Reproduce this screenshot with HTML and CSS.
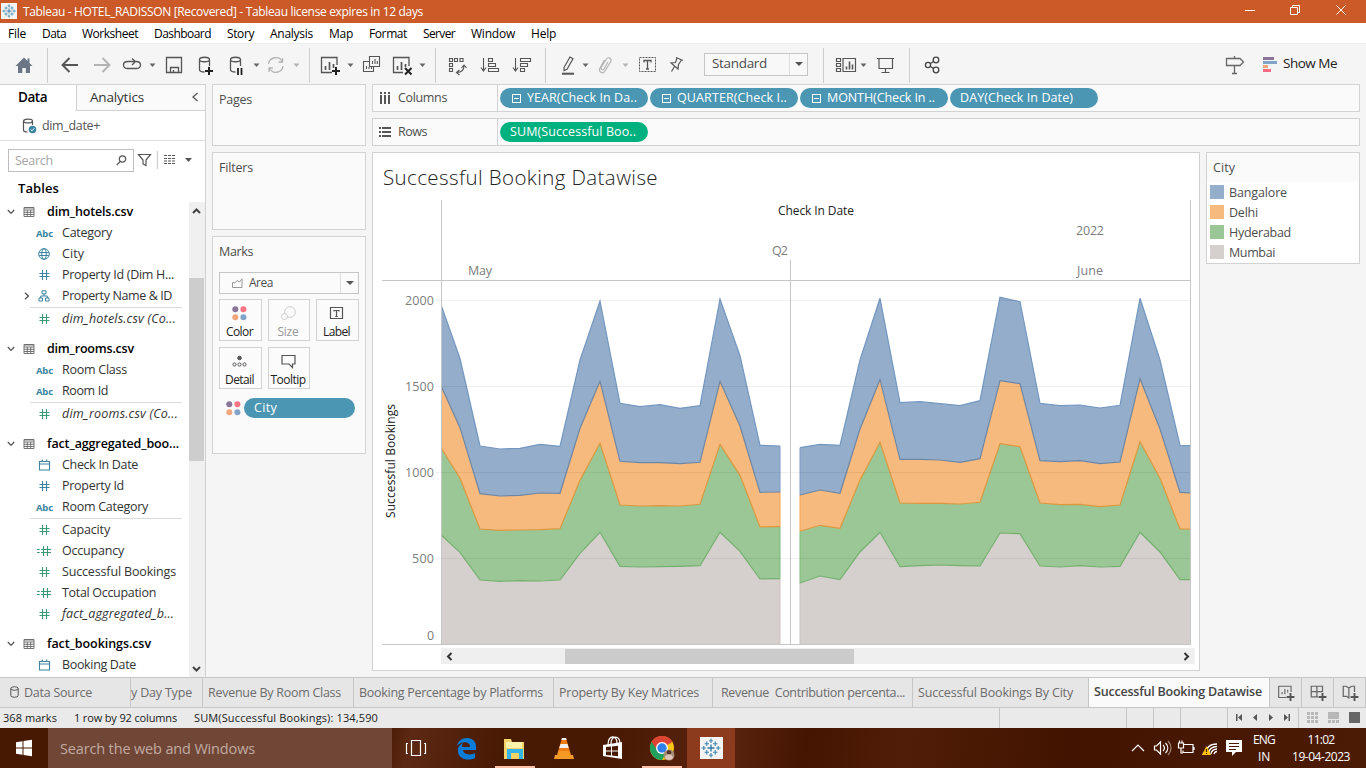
FILE: index.html
```html
<!DOCTYPE html>
<html lang="en">
<head>
<meta charset="utf-8">
<title>Tableau - HOTEL_RADISSON</title>
<link rel="stylesheet" href="styles.css">
</head>
<body>
<svg class="defs" width="0" height="0">
  <symbol id="tableau" viewBox="0 0 18 18"><path d="M9 5.8v6.4M5.8 9h6.4" stroke="#2d7aa8" stroke-width="1.2"/><path d="M9 .5v4M7.300 2.500h3.400M9 13.500v4M7.300 15.500h3.400M2.500 7.300v3.400M.5 9h4M15.500 7.300v3.400M13.500 9h4M5.200 3.200v4M3.200 5.200h4M12.800 3.200v4M10.800 5.200h4M5.200 10.800v4M3.200 12.800h4M12.800 10.800v4M10.800 12.800h4" stroke="#3d88b0" stroke-width="1"/></symbol>
  <symbol id="table" viewBox="0 0 12 12"><path d="M1 1.500h10v9H1zM1 4h10M1 6.300h10M1 8.500h10M4.300 4v6.500M7.700 4v6.500M1 2h10" fill="none" stroke="#666" stroke-width=".9"/></symbol>
  <symbol id="down" viewBox="0 0 8 6"><path d="M.8 1 4 4.400 7.200 1" fill="none" stroke="#555" stroke-width="1.300"/></symbol>
  <symbol id="hash" viewBox="0 0 14 12"><path d="M5.500 1v10M9.500 1v10M2.500 4.500h10M2.500 7.500h10" fill="none" stroke="currentColor" stroke-width="1.100"/></symbol>
  <symbol id="ehash" viewBox="0 0 14 12"><path d="M0 4.500h2.700M0 7.500h2.700M6.500 1v10M10.500 1v10M4 4.500h10M4 7.500h10" fill="none" stroke="currentColor" stroke-width="1.100"/></symbol>
  <symbol id="globe" viewBox="0 0 14 12"><g fill="none" stroke="currentColor"><circle cx="7" cy="6" r="5.300"/><ellipse cx="7" cy="6" rx="2.200" ry="5.300"/><path d="M2.200 4.500h9.600M2.200 7.500h9.600"/></g></symbol>
  <symbol id="tree" viewBox="0 0 14 12"><path d="M5 .8h4v3H5zM2 8h3.500v3H2zM8.500 8H12v3H8.500zM7 4v2M3.700 8V6h6.600v2" fill="none" stroke="currentColor"/></symbol>
  <symbol id="cal" viewBox="0 0 14 12"><path d="M2.500 2.500h10v8.500h-10zM2.500 5h10M5.300.5v2M9.700.5v2" fill="none" stroke="currentColor" stroke-width="1.100"/></symbol>
  <symbol id="dots" viewBox="0 0 15 15"><circle cx="3.300" cy="3.300" r="3" fill="#8b7399"/><circle cx="11.400" cy="3.300" r="3" fill="#fa7383"/><circle cx="3.300" cy="11.300" r="3" fill="#f3a57c"/><circle cx="11.400" cy="11.300" r="3" fill="#82a4cb"/></symbol>
</svg>

<header class="titlebar">
  <span class="app"><svg width="14" height="14"><use href="#tableau"/></svg></span>
  <span class="cap" data-w="400">Tableau - HOTEL_RADISSON [Recovered] - Tableau license expires in 12 days</span>
  <svg class="push" width="126" height="23" viewBox="1240 0 126 23" fill="none" stroke="#fff"><path d="M1245 10.5h10M1290.5 7.5h7v7h-7zM1292.5 7.5v-2h7v7h-2"/><path d="m1336.500 5.500 9 9m0-9-9 9"/></svg>
</header>

<nav class="menu">
  <span data-w="18">File</span><span data-w="24">Data</span><span data-w="56">Worksheet</span><span data-w="57">Dashboard</span><span data-w="27">Story</span><span data-w="43">Analysis</span><span data-w="24">Map</span><span data-w="38">Format</span><span data-w="32">Server</span><span data-w="44">Window</span><span data-w="25">Help</span>
</nav>

<div class="toolbar">
  <svg width="48" height="41" viewBox="0 43 48 41"><path d="M24 56.500 15.500 65h2.500v7h4.300v-5h3.500v5H30v-7h2.500l-3-3v-4.500h-2V60z" fill="#6a7685"/><path d="M47.500 47v35" stroke="#ccc"/></svg>
  <svg width="262" height="41" viewBox="48 43 262 41" fill="none" stroke="#555" stroke-width="1.3">
    <path d="M78 64H63m6.500-7-7 7 7 7" stroke-width="1.9"/>
    <path d="M94 64h15m-6.500-7 7 7-7 7" stroke="#b4b4b4" stroke-width="1.9"/>
    <path d="M128 67.500c-6 0-6-7 0-7h7m-3-3 3.500 3L132 64m4-3.500c6 0 6 7 0 7h-9"/>
    <path d="M149.500 62.500h6l-3 3.500z" fill="#666" stroke="none"/>
    <path d="M166.500 56.500h15v15h-15zM170.500 71v-4.500h8V71M173.500 71v-2"/>
    <path d="M199.500 58.500c0-3 10-3 10 0s-10 3-10 0v10c0 2 3 2.500 5 2.500M209.500 58.500V65"/><path d="M209 66v8M205 70h8" stroke="#222" stroke-width="2"/>
    <path d="M230.500 58.500c0-3 10-3 10 0s-10 3-10 0v10c0 2 3 2.500 5 2.500M240.500 58.500V65"/><path d="M238 67v7M241.500 67v7" stroke="#222" stroke-width="1.8"/>
    <path d="M253.500 62.500h6l-3 3.500z" fill="#666" stroke="none"/>
    <g stroke="#b4b4b4"><path d="M268.500 63c1-7 11-9 14-2m0-4v4h-4M283 65c-1 7-10 9-14 2m0 4v-4h4"/></g>
    <path d="M293.500 62.500h6l-3 3.500z" fill="#b4b4b4" stroke="none"/><path d="M309.500 47v35" stroke="#ccc" stroke-width="1"/>
  </svg>
  <svg width="126" height="41" viewBox="310 43 126 41" fill="none" stroke="#555" stroke-width="1.3">
    <path d="M337 64v-7.500h-15.500v15H332"/><path d="M325.500 69v-4M329.500 69v-8M333.500 67v-4" stroke-width="1.7"/><path d="M336 66v8M332 70h8" stroke="#222" stroke-width="2"/>
    <path d="M347.500 62.500h6l-3 3.500z" fill="#666" stroke="none"/>
    <path d="M369.500 55.500h10v10h-10zM369 60.500h-5.500v10h10V66M372.500 63v-3M375 63v-5M377.300 63v-3M366.500 68v-3M369 68v-2M371.500 68v-2" stroke-width="1.1"/>
    <path d="M409 65v-8.500h-15.500v15H403"/><path d="M397.500 69v-4M401.500 69v-8M405.500 66v-3" stroke-width="1.7"/><path d="m405 67 6.500 6.500m0-6.500-6.500 6.500" stroke="#222" stroke-width="2"/>
    <path d="M419.500 62.500h6l-3 3.500z" fill="#666" stroke="none"/><path d="M435.500 47v35" stroke="#ccc" stroke-width="1"/>
  </svg>
  <svg width="110" height="41" viewBox="436 43 110 41" fill="none" stroke="#555" stroke-width="1.1">
    <path d="M449.500 57.500h3v3h-3zM454.500 57.500h3v3h-3zM460 57.500h3v3h-3zM449.500 62.500h3v3h-3zM449.500 67.500h3v3h-3zM457 71.500c5 0 7-2 7-7m-2.500 2.500 2.500-3 2.500 3M459.500 69l-3 2.500 3 2.500"/>
    <path d="M483.500 57v12m-2.500-2.500 2.500 3.500 2.500-3.500M488.500 57.500h4v3h-4zM488.500 62.500h7v3h-7zM488.500 67.500h10v3h-10z"/>
    <path d="M515.500 57v12m-2.500-2.500 2.500 3.500 2.500-3.500M520.500 57.500h10v3h-10zM520.500 62.500h7v3h-7zM520.500 67.500h4v3h-4z"/><path d="M545.500 47v35" stroke="#ccc"/>
  </svg>
  <svg width="158" height="41" viewBox="546 43 158 41" fill="none" stroke="#555" stroke-width="1.2">
    <path d="m564 66.500 6-10.500 3 1.800-6 10.500-3 1.200z" /><path d="M562 72.700h12" stroke-width="2"/>
    <path d="M582.500 62.500h6l-3 3.500z" fill="#666" stroke="none"/><path d="M622.500 62.500h6l-3 3.500z" fill="#b4b4b4" stroke="none"/>
    <path d="m608 61-4 7c-1 2-4 0-2.500-2l5-8c2-3 6 0 4 3l-5.500 9c-2 3.500-7 1-5-3l4.500-8" stroke="#b4b4b4"/>
    <path d="M639.500 56.500h16v14h-16z" stroke-dasharray="2 1" stroke-width="1"/><path d="M644 61.500v-2h7v2M647.500 59.500v8.500M646 68h3" stroke-width="1.3"/>
    <path d="m676 56.500 7 3m-6-2.500-1.500 4.500-4.500.5 7 6 .5-4.500 3-4.500M674.500 65.500l-3 5"/>
  </svg>
  <div class="select"><span data-w="55">Standard</span><i></i></div>
  <svg width="102" height="41" viewBox="808 43 102 41" fill="none" stroke="#555" stroke-width="1.2">
    <path d="M823.500 47v35M909.500 47v35" stroke="#ccc" stroke-width="1"/>
    <path d="M836.500 57.500h4v3h-4zM836.500 62.500h4v3h-4zM836.500 67.500h4v3h-4zM843 57.500h12.500v13H843z"/><path d="M846.500 68.500v-3M849.500 68.500v-8M852.500 68.500v-5" stroke-width="1.6"/>
    <path d="M860.500 62.500h6l-3 3.500z" fill="#666" stroke="none"/><path d="M877 57.500h17M879 58v9.500h13.500V58M885.500 67.500v4M881.500 71.500h8"/>
  </svg>
  <svg width="373" height="41" viewBox="910 43 373 41" fill="none" stroke="#444" stroke-width="1.3">
    <circle cx="928" cy="64" r="2.600"/><circle cx="936" cy="59" r="2.800"/><circle cx="936" cy="69" r="2.800"/><path d="m930.500 62.500 3-2M930.500 65.500l3 2"/>
    <path d="M1234.500 55v2.500M1226.500 57.500h13.500l3.500 3.500-3.500 3.500h-13.500zM1234.500 64.500v8M1232 72.500h5" stroke="#666"/>
    <g stroke="none"><path d="M1263 56h11v3h-11z" fill="#8b7399"/><path d="M1263 60h14v3h-14z" fill="#82a4cb"/><path d="M1263 64h5v3h-5z" fill="#f3a57c"/><path d="M1263 68h8v3h-8z" fill="#fa6a80"/></g>
  </svg>
  <span class="showme" data-w="54">Show Me</span>
</div>

<main class="main">
  <aside class="datapane">
    <div class="ptabs"><b><span data-w="29">Data</span></b><div class="an"><span data-w="54">Analytics</span><svg width="8" height="10" viewBox="0 0 8 10"><path d="M6.500 1 2 5l4.500 4" fill="none" stroke="#555" stroke-width="1.3"/></svg></div></div>
    <div class="source"><svg width="15" height="16" viewBox="0 0 15 16"><path d="M1.500 3c0-2.500 9-2.500 9 0s-9 2.500-9 0v9c0 1.500 2.500 2 4 2M10.500 3v4" fill="none" stroke="#555" stroke-width="1.2"/><circle cx="10.500" cy="11.500" r="3.800" fill="#3a86a3"/><path d="m8.700 11.500 1.300 1.300 2.300-2.500" stroke="#fff" fill="none"/></svg><span data-w="58">dim_date+</span></div>
    <div class="finder"><div class="search"><span data-w="38">Search</span><svg width="11" height="11" viewBox="0 0 11 11" fill="none" stroke="#555" stroke-width="1.200"><circle cx="6.500" cy="4" r="3.200"/><path d="M4.200 6.500.8 10"/></svg></div>
      <svg width="62" height="24" viewBox="136 148 62 24" fill="none" stroke="#555" stroke-width="1.2"><path d="M138.500 154.500h12l-4.500 5.500v5.500l-3-1.500v-4z"/><path d="M157.500 151v18" stroke="#ccc"/><path d="M164 155.500h12M164 158.500h12M164 161h12M164 163.500h12" stroke-dasharray="3 1"/><path d="M185 158h7l-3.500 4z" fill="#555" stroke="none"/></svg></div>
    <h2><span data-w="41">Tables</span></h2>
    <div class="treewrap">
      <div class="tree">
        <section>
          <div class="hd"><svg width="8" height="6"><use href="#down"/></svg><svg width="12" height="12"><use href="#table"/></svg><span data-w="86">dim_hotels.csv</span></div>
          <div class="row"><em>Abc</em><span data-w="50">Category</span></div>
          <div class="row"><svg><use href="#globe"/></svg><span data-w="22">City</span></div>
          <div class="row"><svg><use href="#hash"/></svg><span data-w="112">Property Id (Dim H...</span></div>
          <div class="row"><svg class="exp" viewBox="0 0 6 8"><path d="m1 .8 3.400 3.200L1 7.200" fill="none" stroke="#555" stroke-width="1.300"/></svg><svg><use href="#tree"/></svg><span data-w="110">Property Name &amp; ID</span></div>
          <hr><div class="row g"><svg><use href="#hash"/></svg><i data-w="114">dim_hotels.csv (Co...</i></div>
        </section>
        <section>
          <div class="hd"><svg width="8" height="6"><use href="#down"/></svg><svg width="12" height="12"><use href="#table"/></svg><span data-w="87">dim_rooms.csv</span></div>
          <div class="row"><em>Abc</em><span data-w="65">Room Class</span></div>
          <div class="row"><em>Abc</em><span data-w="46">Room Id</span></div>
          <hr><div class="row g"><svg><use href="#hash"/></svg><i data-w="116">dim_rooms.csv (Co...</i></div>
        </section>
        <section>
          <div class="hd"><svg width="8" height="6"><use href="#down"/></svg><svg width="12" height="12"><use href="#table"/></svg><span data-w="132">fact_aggregated_boo...</span></div>
          <div class="row"><svg><use href="#cal"/></svg><span data-w="76">Check In Date</span></div>
          <div class="row"><svg><use href="#hash"/></svg><span data-w="62">Property Id</span></div>
          <div class="row"><em>Abc</em><span data-w="86">Room Category</span></div>
          <hr><div class="row g"><svg><use href="#hash"/></svg><span data-w="48">Capacity</span></div>
          <div class="row g"><svg><use href="#ehash"/></svg><span data-w="62">Occupancy</span></div>
          <div class="row g"><svg><use href="#hash"/></svg><span data-w="114">Successful Bookings</span></div>
          <div class="row g"><svg><use href="#ehash"/></svg><span data-w="94">Total Occupation</span></div>
          <div class="row g"><svg><use href="#hash"/></svg><i data-w="112">fact_aggregated_b...</i></div>
        </section>
        <section>
          <div class="hd"><svg width="8" height="6"><use href="#down"/></svg><svg width="12" height="12"><use href="#table"/></svg><span data-w="104">fact_bookings.csv</span></div>
          <div class="row"><svg><use href="#cal"/></svg><span data-w="74">Booking Date</span></div>
        </section>
      </div>
      <div class="vbar"><svg width="9" height="6" viewBox="0 0 9 6"><path d="M1 5 4.500 1.500 8 5" fill="none" stroke="#444" stroke-width="2"/></svg><div class="thumb"></div><svg class="dn" width="9" height="6" viewBox="0 0 9 6"><path d="m1 1 3.500 3.500L8 1" fill="none" stroke="#444" stroke-width="2"/></svg></div>
    </div>
  </aside>

  <aside class="cards">
    <div class="card pages"><span data-w="33">Pages</span></div>
    <div class="card filters"><span data-w="34">Filters</span></div>
    <div class="card marks"><span data-w="34">Marks</span>
      <div class="type"><svg width="11" height="10" viewBox="0 0 11 10"><path d="M.5 9.500v-5L3 4.800 5 2.500l2.500 1.500L10 .8v8.700z" fill="none" stroke="#999"/></svg><span data-w="24">Area</span><i></i></div>
      <div class="btns">
        <div><svg width="15" height="15"><use href="#dots"/></svg><span data-w="27">Color</span></div>
        <div class="off"><svg width="15" height="15" viewBox="0 0 15 15" fill="none" stroke="#ccc"><circle cx="9" cy="6" r="5.300"/><circle cx="3.500" cy="10.500" r="3" fill="#fafafa"/></svg><span data-w="21">Size</span></div>
        <div class="lb"><svg width="15" height="15" viewBox="0 0 15 15" fill="none" stroke="#555" stroke-width="1.200"><path d="M1.500 1.500h12v11h-12zM5 5.500v-1h5v1M7.500 4.500v6M6.300 10.500h2.500"/></svg><span data-w="27">Label</span></div>
        <div><svg width="15" height="15" viewBox="0 0 15 15" fill="none" stroke="#555"><circle cx="7.500" cy="4" r="1.800" fill="#555"/><circle cx="2.500" cy="10.500" r="1.600"/><circle cx="7.500" cy="10.500" r="1.600"/><circle cx="12.500" cy="10.500" r="1.600"/></svg><span data-w="29">Detail</span></div>
        <div><svg width="15" height="15" viewBox="0 0 15 15" fill="none" stroke="#555" stroke-width="1.200"><path d="M1 1.500h13v8.500h-2.500v3.500L8 10H1z"/></svg><span data-w="35">Tooltip</span></div>
      </div>
      <div class="cityrow"><svg width="15" height="15"><use href="#dots"/></svg><div class="pill"><span data-w="23">City</span></div></div>
    </div>
  </aside>

  <div class="work">
    <div class="shelf"><div class="lab"><svg width="12" height="13" viewBox="0 0 12 13"><path d="M2 0v2M2 3v9M6 0v2M6 3v9M10 0v2M10 3v9" stroke="#555" stroke-width="2"/></svg><span data-w="49">Columns</span></div>
      <div class="pill"><u></u><span data-w="110">YEAR(Check In Da..</span></div><div class="pill"><u></u><span data-w="110">QUARTER(Check I..</span></div><div class="pill"><u></u><span data-w="108">MONTH(Check In ..</span></div><div class="pill"><span data-w="113">DAY(Check In Date)</span></div></div>
    <div class="shelf"><div class="lab"><svg width="12" height="13" viewBox="0 0 12 13"><path d="M0 2h2M3 2h9M0 6h2M3 6h9M0 10h2M3 10h9" stroke="#555" stroke-width="2"/></svg><span data-w="29">Rows</span></div>
      <div class="pill green"><span data-w="126">SUM(Successful Boo..</span></div></div>
    <div class="lower">
      <div class="sheet">
        <h1><span data-w="275">Successful Booking Datawise</span></h1>
        <svg id="chart" width="826" height="448" viewBox="373 200 826 448"></svg>
        <div class="hbar"><svg width="7" height="9" viewBox="0 0 7 9"><path d="M5.500 1 2 4.500 5.500 8" fill="none" stroke="#333" stroke-width="2"/></svg><div class="thumb"></div><svg class="rt" width="7" height="9" viewBox="0 0 7 9"><path d="M1.500 1 5 4.500 1.500 8" fill="none" stroke="#333" stroke-width="2"/></svg></div>
      </div>
      <div class="legend"><h3><span data-w="22">City</span></h3>
        <div><i class="c1"></i><span data-w="58">Bangalore</span></div><div><i class="c2"></i><span data-w="29">Delhi</span></div><div><i class="c3"></i><span data-w="62">Hyderabad</span></div><div><i class="c4"></i><span data-w="46">Mumbai</span></div></div>
    </div>
  </div>
</main>

<div class="tabs">
  <div class="t0"><svg width="9" height="12" viewBox="0 0 9 12"><path d="M.8 2.500c0-2.300 7.400-2.300 7.400 0s-7.400 2.300-7.400 0v7c0 2.300 7.400 2.300 7.400 0v-7" fill="none" stroke="#555"/></svg><span data-w="68">Data Source</span></div>
  <div class="t1"><span data-w="61">y Day Type</span></div>
  <div class="t2"><span data-w="133">Revenue By Room Class</span></div>
  <div class="t3"><span data-w="184">Booking Percentage by Platforms</span></div>
  <div class="t4"><span data-w="140">Property By Key Matrices</span></div>
  <div class="t5"><span data-w="184">Revenue&nbsp; Contribution percenta...</span></div>
  <div class="t6"><span data-w="155">Successful Bookings By City</span></div>
  <div class="t7"><span data-w="168">Successful Booking Datawise</span></div>
  <div class="tn"><svg width="18" height="18" viewBox="0 0 16 16" fill="none" stroke="#666" stroke-width="1"><path d="M12.500 7V2h-11v10H8M4.500 9V7M7 9V4.500M9.500 7.500V5"/><path d="M12 8v7M8.500 11.500h7" stroke="#555" stroke-width="1.700"/></svg></div>
  <div class="tn"><svg width="18" height="18" viewBox="0 0 16 16" fill="none" stroke="#666" stroke-width="1.100"><path d="M12 7V2H2v9.500h6M2 6.700h10M7 2v9.500"/><path d="M12 8v7M8.500 11.500h7" stroke="#555" stroke-width="1.700"/></svg></div>
  <div class="tn"><svg width="18" height="18" viewBox="0 0 16 16" fill="none" stroke="#666" stroke-width="1.100"><path d="M7 3.500 4.500 2H2v9h3l2 1.500v-9L9.500 2H12v5"/><path d="M12 8v7M8.500 11.500h7" stroke="#555" stroke-width="1.700"/></svg></div>
</div>

<footer class="status">
  <span data-w="54">368 marks</span><span data-w="103">1 row by 92 columns</span><span data-w="184">SUM(Successful Bookings): 134,590</span>
  <svg width="367" height="20" viewBox="999 708 367 20"><path d="M999.500 708v20M1126.500 708v20M1153.500 708v20M1180.500 708v20M1227.500 708v20M1298.500 708v20" stroke="#c6c6c6"/><path d="M1236 714h1.500v7h-1.500zM1242 714v7l-4-3.500zM1257 714v7l-4-3.500zM1269 714v7l4-3.500zM1284 714v7l4-3.500zM1288.500 714h1.500v7h-1.500z" fill="#555"/><path d="M1307 712h3v3h-3zM1311 712h3v3h-3zM1315 712h3v3h-3zM1307 716h3v3h-3zM1311 716h3v3h-3zM1315 716h3v3h-3zM1307 720h3v3h-3zM1311 720h3v3h-3zM1315 720h3v3h-3zM1328 712h11v7h-11zM1328 720h3v3h-3zM1332 720h3v3h-3zM1336 720h3v3h-3z" fill="#b8b8b8"/><path d="M1349 712h11v11h-11z" fill="#666"/></svg>
</footer>

<div class="taskbar">
  <svg width="48" height="40" viewBox="0 0 48 40" fill="#fff"><path d="m16 14.200 6.500-1V19.500H16zM23.500 13l8.500-1.200v7.700h-8.500zM16 20.500h6.500v6.300l-6.500-1zM23.500 20.500H32v7.700L23.500 27z"/></svg>
  <div class="tsearch"><span data-w="195">Search the web and Windows</span></div>
  <svg width="295" height="40" viewBox="392 728 295 40">
    <path d="M411.500 740.500h9v15h-9zM408 743.500h-1.500v10h1.500M424 743.500h1.500v10h-1.500" fill="none" stroke="#fff" stroke-width="1.200"/>
    <path d="M457 746c1-5 5-8 10-8 6 0 10 4 9 12h-13c0 4 7 6 12 3v5c-8 4-18 0-17-8 0-4 3-6 5-7-1 2-1 3-1 4h8c0-6-9-6-13-1z" fill="#0b7cd8"/>
    <path d="M504 739h7l1 3h12v17h-20z" fill="#f7d368"/><path d="M506 742h16v6h-16z" fill="#fff2ad"/><path d="M507 759v-10h16v10h-4v-6h-8v6z" fill="#35b4e8"/>
    <path d="m562 738h4l5 17h-14z" fill="#f07b13"/><path d="m560.500 744h7l1.200 4h-9.500z" fill="#eee"/><path d="m558.500 751h11l1 4h-13zM555 755h18l1 4h-20z" fill="#f39a24"/><path d="M562 738h4l.6 2h-5.200z" fill="#eee"/>
    <path d="m603 745 19-3v17l-19-3z" fill="#fff"/><path d="M608 745c0-10 9-11 9-2M611 744c0-9 9-9 9-1" stroke="#fff" stroke-width="1.200" fill="none"/><path d="m606 747 5-.5v4h-5zM612 746.400l6-.6v4.700h-6zM606 751.500h5v4l-5-.5zM612 751.500h6v4.700l-6-.6z" fill="#471802"/>
    <circle cx="662" cy="748" r="12" fill="#fbc615"/><path d="M662 748 651.600 742A12 12 0 0 1 672.400 742z" fill="#de4434"/><path d="M662 748 651.600 742A12 12 0 0 0 662 760l4-7z" fill="#1fa15d"/><path d="M662 742h10.400a12 12 0 0 0-20.800 0L657 750z" fill="#de4434"/><circle cx="662" cy="748" r="6" fill="#fff"/><circle cx="662" cy="748" r="4.700" fill="#2f80ed"/><circle cx="669" cy="755" r="5.500" fill="#a98c74"/><circle cx="669" cy="752.500" r="2.300" fill="#51362b"/><path d="M665 758c0-5 8-5 8 0-2 2.500-6 2.500-8 0" fill="#e0c5b8"/>
    <path d="M495 766h40v2h-40zM642 766h40v2h-40z" fill="#fdc1a8"/>
  </svg>
  <div class="tapp"><span><svg width="20" height="20"><use href="#tableau"/></svg></span></div>
  <svg class="push" width="120" height="40" viewBox="1128 728 120 40" fill="none" stroke="#fff" stroke-width="1.200"><path d="m1132 751 6-6 6 6M1154.500 746h2l4-4v12l-4-4h-2zM1163 745c2 2 2 4 0 6M1165.500 743c3 3 3 7 0 10"/><path d="M1168 741c4 4 4 10 0 14" stroke="#a08679"/><path d="M1184 744.500h9v8h-10v-2M1194 747v3M1178.500 743v5h5v-5zM1179.500 740.500v2M1182 740.500v2M1181 748v5h2"/><path d="M1206 754c0-7 4-10 11-10M1208.500 754c0-5 4-7.500 8.500-7.500M1211 754c0-3 3-5 6-5M1214 754c.5-1.500 1.500-2.500 3-2.500" stroke-width="1.300"/><path d="m1206.500 746 4.700 9h-9.400z" fill="#ffc20e" stroke="none"/><path d="M1206.500 749v3M1206.500 753v1" stroke="#472000"/><path d="M1226 740h16v12h-6l-4 4v-4h-6z" fill="#fff" stroke="none"/><path d="M1229 743.500h10M1229 746.500h10M1229 749.500h7" stroke="#471802"/></svg>
  <div class="lang"><span data-w="22">ENG</span><span data-w="12">IN</span></div>
  <div class="clock"><span data-w="27">11:02</span><span data-w="58">19-04-2023</span></div>
</div>
<script src="script.js"></script>
</body>
</html>
```
FILE: styles.css
```css
* { box-sizing: border-box; }
body { margin: 0; width: 1366px; height: 768px; overflow: hidden; display: flex; flex-direction: column; font: 12.5px/18px "Open Sans", "Noto Sans", sans-serif; color: #4e4e4e; background: #f5f5f5; white-space: nowrap; }
svg { display: block; flex: none; }
.defs { position: absolute; }
h1, h2, h3 { margin: 0; font-weight: 400; }
span[data-w], i[data-w] { display: inline-block; flex: none; }
.push { margin-left: auto; }

.titlebar { height: 23px; flex: none; display: flex; align-items: center; background: #cb5a28; color: #fff; font-size: 12px; }
.app { width: 16px; height: 16px; margin: 0 6px 2px 1px; padding: 1px; background: #f4f4f4; }
.cap { padding-top: 1px; }
.menu { height: 20px; flex: none; display: flex; gap: 16px; align-items: center; padding: 2px 0 0 8px; background: #fff; color: #000; font-size: 12px; }

.toolbar { height: 41px; flex: none; display: flex; align-items: center; background: #f5f5f5; border-top: 1px solid #eee; }
.select { width: 104px; height: 23px; border: 1px solid #c6c6c6; display: flex; align-items: center; padding-left: 7px; font-size: 13.5px; background: #f8f8f8; }
.select i, .type i { margin-left: auto; border-left: 1px solid #ddd; display: flex; align-items: center; justify-content: center; width: 18px; height: 100%; }
.select i::after, .type i::after { content: ""; border: 4px solid transparent; border-top-color: #555; border-bottom: 0; }
.select span, .showme { margin-top: -2px; }
.showme { color: #222; font-size: 13.5px; }

.main { height: 593px; flex: none; display: flex; }
.datapane { width: 206px; background: #fff; border-right: 1px solid #d2d2d2; display: flex; flex-direction: column; border-top: 1px solid #d2d2d2; color: #333; }
.ptabs { height: 26px; display: flex; font-size: 13.5px; }
.ptabs b { width: 76px; padding: 3px 0 0 18px; color: #000; font-weight: 600; }
.an { flex: 1; border-left: 1px solid #d2d2d2; border-bottom: 1px solid #d2d2d2; background: #fafafa; padding: 0 6px 1px 13px; display: flex; align-items: center; justify-content: space-between; }
.source { height: 30px; display: flex; align-items: center; gap: 5px; padding-left: 22px; border-bottom: 1px solid #dedede; color: #555; }
.finder { display: flex; margin: 7px 0 0 8px; gap: 2px; align-items: center; }
.search { width: 126px; height: 23px; border: 1px solid #bfbfbf; display: flex; align-items: center; justify-content: space-between; padding: 1px 6px 0; color: #a5a5a5; }
h2 { padding: 7px 0 0 18px; height: 29px; font-size: 13px; font-weight: 600; color: #000; }
.treewrap { flex: 1; min-height: 0; display: flex; justify-content: space-between; overflow: hidden; }
.tree { width: 189px; }
.tree section { margin-bottom: 9px; }
.hd, .row { height: 21px; display: flex; align-items: center; padding-top: 1px; }
.hd { padding-left: 7px; color: #000; font-weight: 600; font-size: 12.5px; }
.hd svg + svg { margin: 0 12px 0 8px; }
.row { padding-left: 37px; color: #3d84a0; }
.row svg { width: 14px; height: 12px; margin-right: 11px; }
.row svg.exp { width: 6px; height: 8px; margin: 0 7px 0 -13px; }
.row em { width: 25px; font: 700 9.500px/12px "Open Sans", sans-serif; letter-spacing: -.2px; margin-left: -1px; margin-right: 1px; padding-top: 1px; }
.row span, .row i { color: #333; }
.row.g { color: #3d9a76; }
.tree hr { margin: 1px 0 0 30px; border: 0; width: 152px; height: 1px; background: #dadada; }
.vbar { width: 16px; margin-top: 1px; background: #f0f0f0; display: flex; flex-direction: column; align-items: flex-start; padding-top: 6px; }
.vbar > svg { margin-left: 3px; }
.vbar .thumb { width: 15px; height: 183px; margin-top: 64px; background: #cdcdcd; }
.vbar .dn { margin-top: auto; margin-bottom: 5px; }

.cards { width: 166px; padding: 0 0 0 6px; display: flex; flex-direction: column; gap: 6px; }
.card { width: 154px; background: #fafafa; border: 1px solid #d2d2d2; padding: 6px 6px; }
.pages { height: 62px; } .filters { height: 78px; } .marks { height: 218px; }
.type { margin-top: 11px; width: 140px; height: 22px; border: 1px solid #c6c6c6; display: flex; align-items: center; font-size: 12px; padding-left: 12px; gap: 6px; background: #fbfbfb; }
.btns { display: grid; grid-template-columns: 43px 42px 43px; gap: 6px; margin-top: 5px; font-size: 12px; color: #222; }
.btns > div { height: 42px; border: 1px solid #d2d2d2; display: flex; flex-direction: column; align-items: center; justify-content: space-between; padding: 6px 2px 0 0; background: #fbfbfb; line-height: 16px; }
.btns .off { color: #999; }
.cityrow { display: flex; align-items: center; margin: 9px 0 0 7px; gap: 3px; }
.pill { width: 148px; height: 20px; border-radius: 10px; background: #4a96b3; color: #fff; display: flex; align-items: center; padding-left: 10px; margin-right: 2px; }
.cityrow .pill { width: 111px; }
.pill u { width: 9px; height: 9px; border: 1px solid #fff; margin: 1px 6px 0 2px; padding: 3px 1px; display: flex; }
.pill u::after { content: ""; height: 1px; width: 5px; background: #fff; }
.green { background: #00b180; }

.work { width: 988px; display: flex; flex-direction: column; }
.shelf { height: 28px; flex: none; margin-bottom: 6px; border: 1px solid #d2d2d2; background: #fafafa; display: flex; align-items: center; }
.shelf .pill { font-weight: 500; }
.lab { width: 125px; height: 100%; margin-right: 2px; border-right: 1px solid #d2d2d2; display: flex; align-items: center; gap: 7px; padding-left: 6px; }
.lower { display: flex; gap: 6px; align-items: flex-start; }
.sheet { width: 828px; height: 519px; border: 1px solid #d2d2d2; background: #fff; display: flex; flex-direction: column; }
h1 { height: 47px; flex: none; padding: 10px 0 0 10px; font-size: 20.5px; line-height: 28px; font-weight: 300; color: #222; }
#chart { font-size: 12.5px; }
#chart text { fill: #7d7d7d; }
.hbar { margin: 0 0 0 68px; width: 754px; height: 16px; background: #efefef; display: flex; align-items: center; padding-left: 5px; }
.hbar .thumb { width: 289px; height: 15px; margin-left: 112px; background: #cbcbcb; }
.hbar .rt { margin-left: auto; margin-right: 5px; }
.legend { width: 154px; height: 112px; border: 1px solid #d2d2d2; background: #fff; }
.legend h3 { height: 29px; padding: 6px 0 0 6px; background: #fafafa; font-size: 12.5px; line-height: 18px; }
.legend div { height: 20px; display: flex; align-items: center; gap: 5px; padding-left: 3px; }
.legend div span { padding-top: 2px; }
.legend i { width: 14px; height: 14px; }
.c1 { background: #94adca; } .c2 { background: #f6b97e; } .c3 { background: #9ac795; } .c4 { background: #d5d0cd; }

.tabs { height: 31px; flex: none; display: flex; background: #e6e6e6; border-top: 1px solid #c6c6c6; border-bottom: 1px solid #c6c6c6; color: #6c6c6c; }
.tabs > div { border-right: 1px solid #c6c6c6; display: flex; align-items: center; padding-left: 5px; }
.tabs .t0 { width: 131px; padding-left: 10px; gap: 5px; }
.t0 svg { margin-top: -2px; }
.tabs .t1 { width: 72px; padding-left: 0; } .t2 { width: 151px; } .t3 { width: 200px; }
.t4 { width: 159px; } .tabs .t5 { width: 200px; padding-left: 8px; } .t6 { width: 176px; }
.tabs .t7 { width: 181px; background: #fafafa; color: #444; font-weight: 600; font-size: 12.5px; }
.tabs .t7 span { margin-top: -2px; }
.tabs .tn { width: 32px; padding: 0; justify-content: center; }
.status { height: 20px; flex: none; display: flex; align-items: center; gap: 17px; padding-left: 3px; background: #eaeaea; color: #222; font-size: 11px; }
.status svg { margin-left: auto; }

.taskbar { height: 40px; flex: none; display: flex; background: linear-gradient(100deg, #471802 0, #471802 28%, #5d2914 30%, #481903 37%, #471802 44%, #5a2410 53%, #451501 59%, #501d08 66%, #421400 78%, #4c1b06 100%); color: #fff; }
.tsearch { width: 344px; background: #704637; padding: 12px 0 0 12px; font-size: 14.5px; color: #c0aaa0; }
.tapp { width: 48px; background: #8c3c1d; display: flex; justify-content: center; padding-top: 9px; }
.tapp span { width: 23px; height: 22px; background: #f4f4f4; padding: 1px 1.5px; }
.lang, .clock { display: flex; flex-direction: column; align-items: center; font-size: 12px; line-height: 17px; padding-top: 3px; }
.lang { width: 32px; }
.clock { width: 82px; margin-right: 4px; }
```
FILE: script.js
```js
// Spread each label over its nominal width.
document.querySelectorAll('[data-w]').forEach(el => {
  const natural = el.getBoundingClientRect().width;
  el.style.letterSpacing = (el.dataset.w - natural) / el.textContent.length + 'px';
});

// Top edge of each stacked series, one value per day, in chart units.
const may = [
  [302, 358.5, 446, 449, 448.3, 444.3, 446.3, 360, 301, 403.3, 406.7, 404.7, 408.3, 405.7, 299, 355.7, 445.3, 446],
  [383.6, 427.7, 493.7, 496, 495.3, 493, 493.3, 428.3, 381.3, 461.3, 462.7, 462.7, 463.7, 462.3, 381.3, 426, 492.3, 492],
  [446, 478.3, 529, 530.3, 530, 529.7, 528.7, 480.3, 443.3, 505, 506, 505.7, 506, 504.3, 444.3, 475.3, 527, 526.7],
  [534, 552.3, 580, 581.3, 580.7, 581, 580, 553.3, 532.3, 566.3, 567, 566.7, 566.3, 565.7, 532.3, 551.3, 579, 578.7]
];
const june = [
  [447.7, 444.3, 445.3, 360, 298.3, 402.7, 401.7, 403.7, 405.7, 400.7, 297.3, 301.7, 403.3, 405.7, 405, 408, 405.3, 298.3, 360, 445.3, 446],
  [495, 490, 493.3, 429, 379.7, 459.3, 459.3, 460, 462.3, 458.7, 380.7, 383.7, 460.7, 461.7, 460.7, 463.7, 462, 378.7, 429, 492.3, 493.3],
  [531.3, 525.3, 528.3, 480, 442.3, 503, 503.3, 503.3, 504, 502.3, 443.7, 446.7, 503, 504.7, 504.3, 506.7, 505, 441.7, 478.3, 529, 529.3],
  [583, 576, 579.7, 552, 532.3, 566.7, 565.7, 565, 565.7, 566, 533, 533.7, 566, 567, 565.7, 567, 566.3, 532.3, 552, 579.7, 579.7]
];
const fills = ['#94adca', '#f6b97e', '#9ac795', '#d5d0cd'];
const lines = ['#7497c0', '#6d86a3', '#db983e', '#74b06e'];
const edges = ['#7a9bc4', '#f5a14f', '#7fba79', '#c9c1be'];
let out = '<clipPath id="plot"><path d="M441 200h750v446H441z"/></clipPath>';
const grid = c => [300.5, 386.5, 472.5, 558.5].map(y => `<path d="M436 ${y}h755" stroke="${c}"/>`).join('');
out += '<g clip-path="url(#plot)" fill="none">';
[[440, may], [800, june]].forEach(([x0, set]) => {
  const pts = set.map(s => s.map((y, i) => `${x0 + i * 20},${y}`));
  pts.forEach((p, k) => {
    const last = x0 + (p.length - 1) * 20;
    const under = pts[k + 1] ? [...pts[k + 1]].reverse().join(' ') : `${last},644 ${x0},644`;
    out += `<polygon points="${p.join(' ')} ${under}" fill="${fills[k]}"/>`;
  });
  pts.forEach((p, k) => {
    const edgeX = x0 === 440 ? 780 : 800, at = x0 === 440 ? set[k].length - 1 : 0;
    const low = set[k + 1] ? set[k + 1][at] : 644;
    out += `<path d="M${edgeX} ${set[k][at]}V${low}" stroke="${edges[k]}"/>`;
    out += `<polyline points="${p.join(' ')}" stroke="${lines[k]}" stroke-width="1.2"/>`;
  });
});
out += '</g>' + grid('rgba(0,0,0,.06)');
out += '<path d="M441.500 200v444M1190.500 200v444M790.500 260v384M382 280.500h809M382 644.500h809" stroke="#c6c6c6" fill="none"/>';
const label = (x, y, w, t, extra = '') => `<text x="${x}" y="${y}" textLength="${w}" ${extra}>${t}</text>`;
out += label(778, 215, 76, 'Check In Date', 'style="fill:#222;font-size:12px"');
out += label(1076, 235, 28, '2022') + label(772, 255, 16, 'Q2') + label(468, 275, 24, 'May') + label(1077, 275, 26, 'June');
out += label(405, 305, 29, '2000') + label(405, 391, 29, '1500') + label(405, 477, 29, '1000') + label(412, 563, 22, '500') + label(427, 640, 7, '0');
out += label(0, 0, 114, 'Successful Bookings', 'transform="translate(395 518) rotate(-90)" style="fill:#222;font-size:12px"');
document.getElementById('chart').innerHTML = out;
```
